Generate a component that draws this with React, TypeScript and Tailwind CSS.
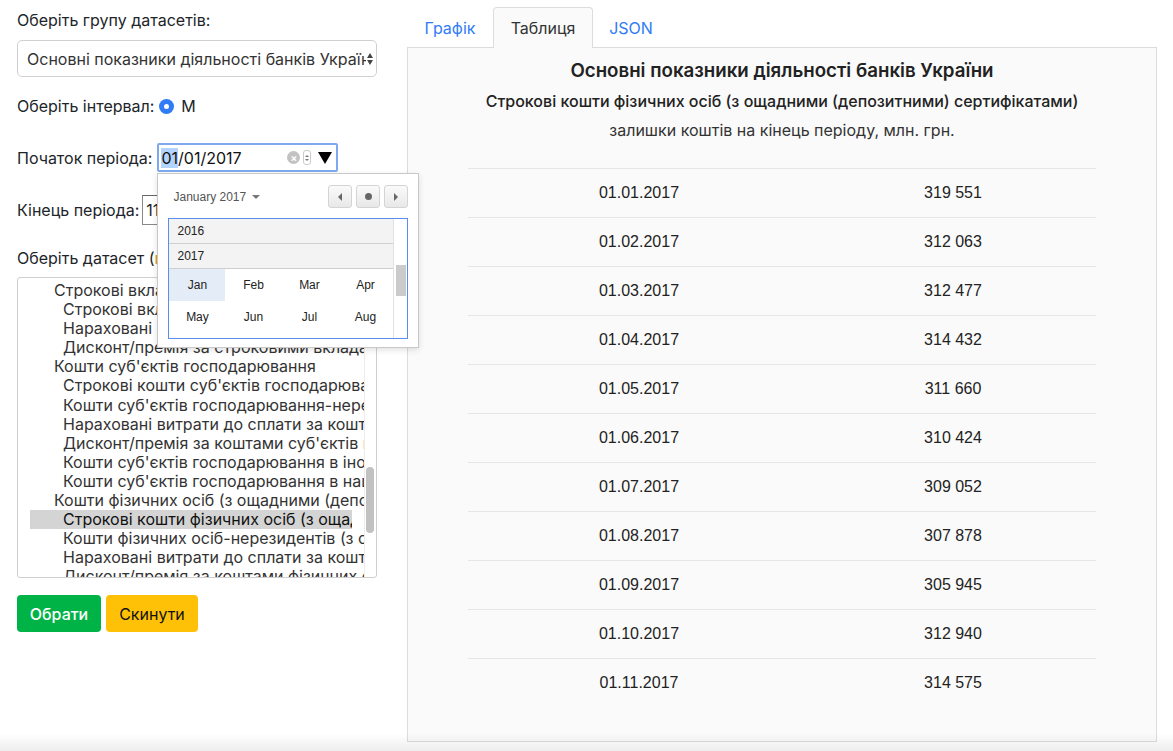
const ROWS = [
  ['01.01.2017', '319 551'],
  ['01.02.2017', '312 063'],
  ['01.03.2017', '312 477'],
  ['01.04.2017', '314 432'],
  ['01.05.2017', '311 660'],
  ['01.06.2017', '310 424'],
  ['01.07.2017', '309 052'],
  ['01.08.2017', '307 878'],
  ['01.09.2017', '305 945'],
  ['01.10.2017', '312 940'],
  ['01.11.2017', '314 575'],
]

// [level, text, selected]
const ITEMS: [number, string, boolean?][] = [
  [1, 'Строкові вклади (депозити) банків'],
  [2, 'Строкові вклади (депозити) банків-резидентів'],
  [2, 'Нараховані витрати до сплати за строковими вкладами'],
  [2, 'Дисконт/премія за строковими вкладами (депозитами)'],
  [1, "Кошти суб'єктів господарювання"],
  [2, "Строкові кошти суб'єктів господарювання"],
  [2, "Кошти суб'єктів господарювання-нерезидентів"],
  [2, "Нараховані витрати до сплати за коштами суб'єктів"],
  [2, "Дисконт/премія за коштами суб'єктів господарювання"],
  [2, "Кошти суб'єктів господарювання в іноземній валюті"],
  [2, "Кошти суб'єктів господарювання в національній валюті"],
  [1, 'Кошти фізичних осіб (з ощадними (депозитними) сертифікатами)'],
  [2, 'Строкові кошти фізичних осіб (з ощадними (депозитними) сертифікатами)', true],
  [2, 'Кошти фізичних осіб-нерезидентів (з ощадними сертифікатами)'],
  [2, 'Нараховані витрати до сплати за коштами фізичних осіб'],
  [2, 'Дисконт/премія за коштами фізичних осіб'],
]

const MONTHS = [['Jan', 'Feb', 'Mar', 'Apr'], ['May', 'Jun', 'Jul', 'Aug']]

function DatePopup() {
  return (
    <div className="absolute left-0 top-[30px] z-20 w-[262px] h-[175px] bg-white border border-[#c8c8c8] shadow-[0_2px_6px_rgba(0,0,0,.12)] font-['Liberation_Sans',Arial,sans-serif]">
      <div className="flex items-center justify-between pl-[15px] pr-[10px] pt-[11px]">
        <span className="flex items-center gap-[6px] text-[12px] text-[#555]">
          January 2017
          <span className="w-0 h-0 border-x-[4px] border-x-transparent border-t-[4px] border-t-[#777]" />
        </span>
        <div className="flex gap-[4px]">
          {['prev', 'dot', 'next'].map((k) => (
            <span key={k} className="grid place-items-center w-[24px] h-[23px] rounded-[3px] border border-[#d4d4d4] bg-gradient-to-b from-[#fafafa] to-[#e8e8e8]">
              {k === 'prev' && <span className="w-0 h-0 border-y-[4px] border-y-transparent border-r-[4px] border-r-[#666]" />}
              {k === 'dot' && <span className="size-[7px] rounded-full bg-[#666]" />}
              {k === 'next' && <span className="w-0 h-0 border-y-[4px] border-y-transparent border-l-[4px] border-l-[#666]" />}
            </span>
          ))}
        </div>
      </div>
      <div className="ml-[10px] mt-[10px] w-[240px] h-[121px] border border-[#5b8def] flex overflow-hidden">
        <div className="flex-1 text-[12px] text-[#222]">
          {['2016', '2017'].map((y) => (
            <div key={y} className="h-[25px] flex items-center pl-[8px] bg-[#f3f3f3] border-b border-[#cfcfcf]">{y}</div>
          ))}
          {MONTHS.map((r, i) => (
            <div key={i} className="flex">
              {r.map((m) => (
                <span key={m} className={`w-[56px] h-[32px] grid place-items-center ${m === 'Jan' ? 'bg-[#e4ecf8]' : ''}`}>{m}</span>
              ))}
            </div>
          ))}
        </div>
        <div className="w-[15px] border-l border-[#e2e2e2] relative">
          <span className="absolute left-[2px] top-[46px] w-[10px] h-[31px] bg-[#cbcbcb]" />
        </div>
      </div>
    </div>
  )
}

export default function App() {
  return (
    <div className="relative min-h-[751px] bg-white font-['Inter',sans-serif] text-[16px] text-[#212529] flex">
      {/* left form */}
      <div className="ml-[17px] w-[360px] pt-[10px] shrink-0">
        <div className="leading-[20px]">Оберіть групу датасетів:</div>
        <div className="mt-[10px] h-[37px] rounded-[5px] border border-[#d0d0d0] flex items-center pl-[9px] pr-[3px]">
          <span className="flex-1 whitespace-nowrap overflow-hidden text-[#333]">Основні показники діяльності банків України</span>
          <span className="flex flex-col gap-[2px] ml-[1px]">
            <span className="w-0 h-0 border-x-[3.5px] border-x-transparent border-b-[5px] border-b-[#444]" />
            <span className="w-0 h-0 border-x-[3.5px] border-x-transparent border-t-[5px] border-t-[#444]" />
          </span>
        </div>

        <div className="mt-[19px] flex items-center gap-[5px] leading-[20px]">
          Оберіть інтервал:
          <span className="grid place-items-center size-[15px] rounded-full bg-[#2f7cf6]">
            <span className="size-[5px] rounded-full bg-white" />
          </span>
          <span className="ml-[2px]">M</span>
        </div>

        <div className="mt-[27px] flex items-center gap-[5px]">
          <span>Початок періода:</span>
          <div className="relative">
            <div className="w-[181px] h-[29px] rounded-[2px] border-2 border-[#7fa9ee] flex items-center pl-[2px] pr-[2px] text-[#111]">
              <span className="flex-1"><span className="bg-[#b3d4fc]">01</span>/01/2017</span>
              <span className="grid place-items-center size-[13px] rounded-full bg-[#c2c2c2] text-white text-[10px] leading-none font-bold">×</span>
              <span className="ml-[3px] flex flex-col items-center justify-center gap-[2px] w-[8px] h-[15px] rounded-[3px] border border-[#ccc]">
                <span className="w-0 h-0 border-x-[2px] border-x-transparent border-b-[2px] border-b-[#777]" />
                <span className="w-0 h-0 border-x-[2px] border-x-transparent border-t-[2px] border-t-[#777]" />
              </span>
              <span className="ml-[7px] mr-[2px] w-0 h-0 border-x-[7px] border-x-transparent border-t-[12px] border-t-black" />
            </div>
            <DatePopup />
          </div>
        </div>

        <div className="mt-[23px] flex items-center gap-[3px]">
          <span>Кінець періода:</span>
          <div className="w-[180px] h-[30px] border border-[#888] border-t-[#666] flex items-center pl-[3px]">11/01/2017</div>
        </div>

        <div className="mt-[23px] leading-[20px]">
          Оберіть датасет (<span className="text-[#e69500]">макс. 5</span>):
        </div>

        <div className="mt-[9px] h-[301px] rounded-[3px] border border-[#cfcfcf] flex overflow-hidden">
          <div className="flex-1 pl-[12px] pt-[3px] overflow-hidden leading-[19.1px] text-[#333]">
            {ITEMS.map(([lvl, t, sel], i) => (
              <div key={i} className={`whitespace-nowrap overflow-hidden ${sel ? 'bg-[#d4d4d4] mr-[12px] text-[#111]' : ''} ${lvl === 1 ? 'pl-[24px]' : 'pl-[33px]'}`}>{t}</div>
            ))}
          </div>
          <div className="w-[12px] border-l border-[#ececec] relative">
            <span className="absolute left-[1px] top-[189px] w-[8px] h-[66px] rounded-full bg-[#c1c1c1]" />
          </div>
        </div>

        <div className="mt-[17px] flex gap-[5px]">
          <button className="h-[37px] w-[84px] rounded-[4px] bg-[#00b347] text-white font-medium">Обрати</button>
          <button className="h-[37px] w-[92px] rounded-[4px] bg-[#ffc107] text-[#111]">Скинути</button>
        </div>
      </div>

      {/* right panel */}
      <div className="ml-[30px] w-[750px] pt-[7px] shrink-0">
        <div className="flex h-[41px] relative z-10 -mb-px">
          <span className="w-[86px] grid place-items-center text-[#2f7cf6]">Графік</span>
          <span className="w-[100px] grid place-items-center rounded-t-[4px] border border-b-0 border-[#dcdcdc] bg-[#fafafa] text-[#333]">Таблиця</span>
          <span className="w-[76px] grid place-items-center text-[#2f7cf6]">JSON</span>
        </div>
        <div className="h-[695px] border border-[#dcdcdc] bg-[#fafafa] pt-[13px] text-center">
          <div className="text-[18.7px] font-semibold leading-[20px] text-[#222]">Основні показники діяльності банків України</div>
          <div className="mt-[10px] text-[16px] font-medium leading-[20px] text-[#222]">Строкові кошти фізичних осіб (з ощадними (депозитними) сертифікатами)</div>
          <div className="mt-[9px] leading-[20px] text-[#333]">залишки коштів на кінець періоду, млн. грн.</div>
          <div className="mx-auto mt-[28px] w-[628px] font-['Liberation_Sans',Arial,sans-serif]">
            {ROWS.map(([d, v]) => (
              <div key={d} className="flex h-[49px] items-center border-t border-[#e6e6e6] text-[#222]">
                <span className="w-[342px]">{d}</span>
                <span className="w-[286px]">{v}</span>
              </div>
            ))}
          </div>
        </div>
      </div>

      <div className="pointer-events-none absolute left-0 right-0 bottom-0 h-[18px] bg-gradient-to-b from-transparent to-black/[0.07]" />
    </div>
  )
}
